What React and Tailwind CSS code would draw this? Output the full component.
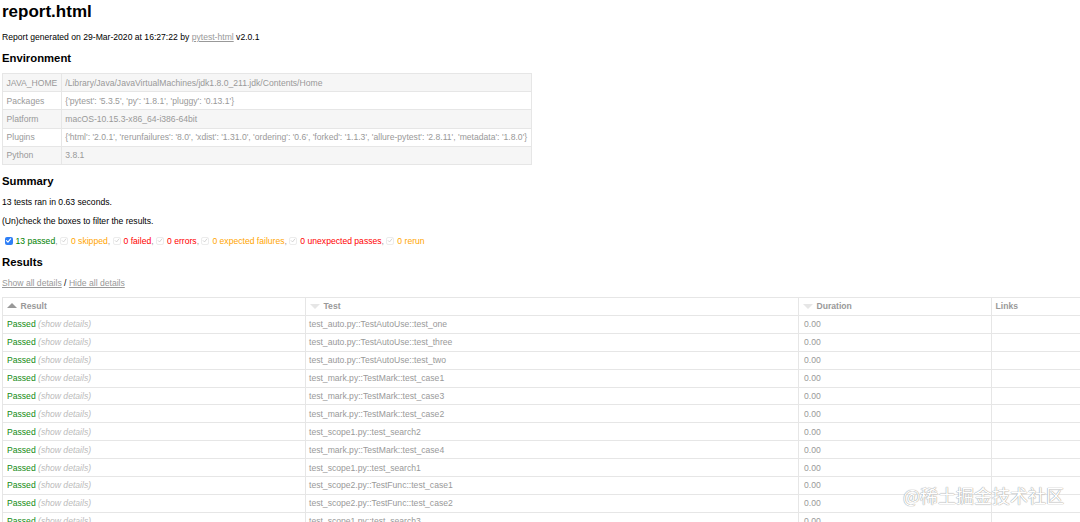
import React from 'react';

const environment = [
    ['JAVA_HOME', '/Library/Java/JavaVirtualMachines/jdk1.8.0_211.jdk/Contents/Home'],
    ['Packages', "{'pytest': '5.3.5', 'py': '1.8.1', 'pluggy': '0.13.1'}"],
    ['Platform', 'macOS-10.15.3-x86_64-i386-64bit'],
    ['Plugins', "{'html': '2.0.1', 'rerunfailures': '8.0', 'xdist': '1.31.0', 'ordering': '0.6', 'forked': '1.1.3', 'allure-pytest': '2.8.11', 'metadata': '1.8.0'}"],
    ['Python', '3.8.1'],
];

const filters = [
    { label: '13 passed', color: 'text-[#008000]', checked: true },
    { label: '0 skipped', color: 'text-[#ffa500]' },
    { label: '0 failed', color: 'text-[#ff0000]' },
    { label: '0 errors', color: 'text-[#ff0000]' },
    { label: '0 expected failures', color: 'text-[#ffa500]' },
    { label: '0 unexpected passes', color: 'text-[#ff0000]' },
    { label: '0 rerun', color: 'text-[#ffa500]' },
];

const tests = [
    'test_auto.py::TestAutoUse::test_one',
    'test_auto.py::TestAutoUse::test_three',
    'test_auto.py::TestAutoUse::test_two',
    'test_mark.py::TestMark::test_case1',
    'test_mark.py::TestMark::test_case3',
    'test_mark.py::TestMark::test_case2',
    'test_scope1.py::test_search2',
    'test_mark.py::TestMark::test_case4',
    'test_scope1.py::test_search1',
    'test_scope2.py::TestFunc::test_case1',
    'test_scope2.py::TestFunc::test_case2',
    'test_scope1.py::test_search3',
    'test_scope2.py::TestFunc::test_case3',
];

function FilterBox({ checked }) {
    if (checked) {
        return (
            <span className="mr-[3px] inline-flex h-[8px] w-[8px] items-center justify-center rounded-[2px] bg-[#2f7ff6]">
                <svg viewBox="0 0 10 10" className="h-[7px] w-[7px]">
                    <path d="M2 5.2 L4.2 7.4 L8 2.6" fill="none" stroke="#fff" strokeWidth="1.6" strokeLinecap="round" strokeLinejoin="round" />
                </svg>
            </span>
        );
    }
    return (
        <span className="mr-[3px] inline-flex h-[8px] w-[8px] items-center justify-center rounded-[2px] border border-[#ececec] bg-white">
            <svg viewBox="0 0 10 10" className="h-[7px] w-[7px]">
                <path d="M2 5.2 L4.2 7.4 L8 2.6" fill="none" stroke="#c4c4c4" strokeWidth="1.2" strokeLinecap="round" strokeLinejoin="round" />
            </svg>
        </span>
    );
}

function SortIcon({ active }) {
    // css triangles, same trick as the pytest-html stylesheet
    if (active) {
        return <span className="mr-[4px] mt-[2px] inline-block h-0 w-0 border-x-[5.5px] border-b-[5.5px] border-x-transparent border-b-[#999]" />;
    }
    return <span className="mr-[4px] mt-[3px] inline-block h-0 w-0 border-x-[5.5px] border-t-[5.5px] border-x-transparent border-t-[#e6e6e6]" />;
}

export default function App() {
    return (
        <div className="relative h-[522px] w-[1080px] overflow-hidden bg-white">
            <div className="pl-[2px] font-['Liberation_Sans',Arial,sans-serif] text-[8.6px] text-[#999]">
                <h1 className="mt-[2px] text-[17px] font-bold leading-[20px] text-black">report.html</h1>
                <p className="mt-[10px] leading-[10px] text-black">
                    Report generated on 29-Mar-2020 at 16:27:22 by{' '}
                    <a className="text-[#999] underline">pytest-html</a> v2.0.1
                </p>

                <h2 className="mt-[9px] text-[11.3px] font-bold leading-[14px] text-black">Environment</h2>
                <table className="mt-[8px] border-collapse">
                    <tbody>
                        {environment.map(([key, value], i) => (
                            <tr key={key} className={i % 2 === 0 ? 'bg-[#f6f6f6]' : 'bg-white'}>
                                <td className="h-[18.2px] border border-[#e6e6e6] px-[3.5px] py-0 leading-[10px]">{key}</td>
                                <td className="h-[18.2px] border border-[#e6e6e6] px-[3.5px] py-0 leading-[10px]">{value}</td>
                            </tr>
                        ))}
                    </tbody>
                </table>

                <h2 className="mt-[9px] text-[11.3px] font-bold leading-[14px] text-black">Summary</h2>
                <p className="mt-[9px] leading-[10px] text-black">13 tests ran in 0.63 seconds.</p>
                <p className="mt-[9px] leading-[10px] text-black">(Un)check the boxes to filter the results.</p>
                <div className="mt-[10px] flex h-[10px] items-center pl-[2.5px] leading-[10px]">
                    {filters.map((f, i) => (
                        <span key={f.label} className="flex items-center whitespace-pre">
                            <FilterBox checked={f.checked} />
                            <span className={f.color}>{f.label}</span>
                            {i < filters.length - 1 && <span>, </span>}
                        </span>
                    ))}
                </div>

                <h2 className="mt-[9px] text-[11.3px] font-bold leading-[14px] text-black">Results</h2>
                <p className="mt-[9px] leading-[10px]">
                    <a className="underline">Show all details</a>
                    <span className="text-black"> / </span>
                    <a className="underline">Hide all details</a>
                </p>

                <table className="mt-[9px] w-[1120px] table-fixed border-collapse text-left">
                    <thead>
                        <tr>
                            <th className="h-[18px] w-[303px] border border-[#e6e6e6] px-[3.5px] py-0 font-bold leading-[10px]">
                                <div className="flex items-start"><SortIcon active />Result</div>
                            </th>
                            <th className="h-[18px] w-[493px] border border-[#e6e6e6] px-[3.5px] py-0 font-bold leading-[10px]">
                                <div className="flex items-start"><SortIcon />Test</div>
                            </th>
                            <th className="h-[18px] w-[193px] border border-[#e6e6e6] px-[3.5px] py-0 font-bold leading-[10px]">
                                <div className="flex items-start"><SortIcon />Duration</div>
                            </th>
                            <th className="h-[18px] border border-[#e6e6e6] px-[3.5px] py-0 font-bold leading-[10px]">Links</th>
                        </tr>
                    </thead>
                    <tbody>
                        {tests.map((name) => (
                            <tr key={name}>
                                <td className="h-[17.9px] border border-[#e6e6e6] px-[4px] py-0 leading-[10px]">
                                    <span className="text-[#118a11]">Passed</span>
                                    <span className="italic text-[#bbb]"> (show details)</span>
                                </td>
                                <td className="h-[17.9px] border border-[#e6e6e6] px-[3px] py-0 leading-[10px]">{name}</td>
                                <td className="h-[17.9px] border border-[#e6e6e6] px-[5px] py-0 leading-[10px]">0.00</td>
                                <td className="h-[17.9px] border border-[#e6e6e6] px-[3.5px] py-0 leading-[10px]"></td>
                            </tr>
                        ))}
                    </tbody>
                </table>
            </div>

            <div className="absolute left-[903px] top-[483px] font-['Noto_Sans_CJK_SC',sans-serif] text-[18px] leading-[24px] text-white [text-shadow:0_0_1px_#9a9a9a,0_0_1px_#9a9a9a]">
                @稀土掘金技术社区
            </div>
        </div>
    );
}
